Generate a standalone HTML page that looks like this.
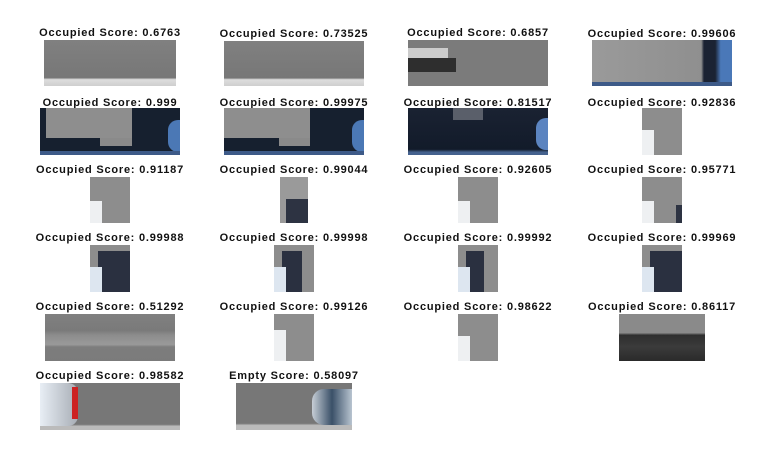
<!DOCTYPE html>
<html><head><meta charset="utf-8"><style>
body{margin:0;background:#fff;width:762px;height:462px;position:relative;overflow:hidden}
.t{position:absolute;width:220px;margin-left:-110px;text-align:center;font:bold 11px "Liberation Sans",Arial,sans-serif;letter-spacing:0.8px;color:#111;white-space:nowrap;line-height:12px}
.i{position:absolute;background:#7c7c7c;overflow:hidden}
.i b{position:absolute;display:block}
.road{background:linear-gradient(180deg,#808080 0%,#777 82%,#ddd 86%,#cfcfcf 100%)}
.dark2{background:linear-gradient(180deg,#1a2232 0%,#121b2a 88%,#45628e 94%,#45628e 100%)}
.narrow{background:#8d8d8d}
.curb{background:linear-gradient(180deg,#808080 0%,#7a7a7a 35%,#8c8c8c 45%,#9a9a9a 65%,#7d7d7d 70%,#7b7b7b 100%)}
.curb2{background:linear-gradient(180deg,#8a8a8a 0%,#8a8a8a 40%,#2e2e2e 45%,#3b3b3b 70%,#2a2a2a 100%)}
</style></head><body>
<div class="t" style="left:110px;top:27px">Occupied Score: 0.6763</div>
<div class="i road" style="left:44px;top:40px;width:132px;height:46px"></div>
<div class="t" style="left:294px;top:28px">Occupied Score: 0.73525</div>
<div class="i road" style="left:224px;top:41px;width:140px;height:45px"></div>
<div class="t" style="left:478px;top:27px">Occupied Score: 0.6857</div>
<div class="i" style="left:408px;top:40px;width:140px;height:46px;background:linear-gradient(180deg,#7b7b7b 0%,#7b7b7b 100%)"><b style="left:0;top:8px;width:40px;height:10px;background:#ccc"></b><b style="left:0;top:18px;width:48px;height:14px;background:#2e2e2e"></b></div>
<div class="t" style="left:662px;top:28px">Occupied Score: 0.99606</div>
<div class="i" style="left:592px;top:40px;width:140px;height:46px;background:linear-gradient(90deg,#9a9a9a 0%,#8f8f8f 78%,#1b2333 80%,#1b2333 88%,#4a78b8 92%)"><b style="left:0;bottom:0;width:140px;height:4px;background:#3d5a88"></b></div>

<div class="t" style="left:110px;top:97px">Occupied Score: 0.999</div>
<div class="i" style="left:40px;top:108px;width:140px;height:47px;background:#16202f"><b style="left:6px;top:0;width:86px;height:30px;background:#8e8e8e"></b><b style="left:60px;top:30px;width:32px;height:8px;background:#8a8a8a"></b><b style="right:0;top:12px;width:12px;height:32px;background:#4b78b5;border-radius:10px 0 0 10px"></b><b style="left:0;bottom:0;width:140px;height:4px;background:#3d5a88"></b></div>
<div class="t" style="left:294px;top:97px">Occupied Score: 0.99975</div>
<div class="i" style="left:224px;top:108px;width:140px;height:47px;background:#16202f"><b style="left:0;top:0;width:86px;height:30px;background:#8e8e8e"></b><b style="left:55px;top:30px;width:31px;height:8px;background:#8a8a8a"></b><b style="right:0;top:12px;width:12px;height:32px;background:#4b78b5;border-radius:10px 0 0 10px"></b><b style="left:0;bottom:0;width:140px;height:4px;background:#3d5a88"></b></div>
<div class="t" style="left:478px;top:97px">Occupied Score: 0.81517</div>
<div class="i dark2" style="left:408px;top:108px;width:140px;height:47px"><b style="left:45px;top:0;width:30px;height:12px;background:#5a5f6a"></b><b style="right:0;top:10px;width:12px;height:32px;background:#5b84c0;border-radius:10px 0 0 10px"></b></div>
<div class="t" style="left:662px;top:97px">Occupied Score: 0.92836</div>
<div class="i narrow" style="left:642px;top:108px;width:40px;height:47px"><b style="left:0;top:22px;width:12px;height:25px;background:#eef0f2"></b></div>

<div class="t" style="left:110px;top:164px">Occupied Score: 0.91187</div>
<div class="i narrow" style="left:90px;top:177px;width:40px;height:46px"><b style="left:0;top:24px;width:12px;height:22px;background:#eef0f2"></b></div>
<div class="t" style="left:294px;top:164px">Occupied Score: 0.99044</div>
<div class="i" style="left:280px;top:177px;width:28px;height:46px;background:#9a9a9a"><b style="left:6px;top:22px;width:22px;height:24px;background:#2d3342"></b></div>
<div class="t" style="left:478px;top:164px">Occupied Score: 0.92605</div>
<div class="i narrow" style="left:458px;top:177px;width:40px;height:46px"><b style="left:0;top:24px;width:12px;height:22px;background:#eef0f2"></b></div>
<div class="t" style="left:662px;top:164px">Occupied Score: 0.95771</div>
<div class="i narrow" style="left:642px;top:177px;width:40px;height:46px"><b style="left:0;top:24px;width:12px;height:22px;background:#eef0f2"></b><b style="right:0;top:28px;width:6px;height:18px;background:#2d3342"></b></div>

<div class="t" style="left:110px;top:232px">Occupied Score: 0.99988</div>
<div class="i narrow" style="left:90px;top:245px;width:40px;height:47px"><b style="left:8px;top:6px;width:32px;height:41px;background:#2a3040"></b><b style="left:0;top:22px;width:12px;height:25px;background:#dde6f0"></b></div>
<div class="t" style="left:294px;top:232px">Occupied Score: 0.99998</div>
<div class="i narrow" style="left:274px;top:245px;width:40px;height:47px"><b style="left:8px;top:6px;width:20px;height:41px;background:#2a3040"></b><b style="left:0;top:22px;width:12px;height:25px;background:#dde6f0"></b></div>
<div class="t" style="left:478px;top:232px">Occupied Score: 0.99992</div>
<div class="i narrow" style="left:458px;top:245px;width:40px;height:47px"><b style="left:8px;top:6px;width:18px;height:41px;background:#2a3040"></b><b style="left:0;top:22px;width:12px;height:25px;background:#dde6f0"></b></div>
<div class="t" style="left:662px;top:232px">Occupied Score: 0.99969</div>
<div class="i narrow" style="left:642px;top:245px;width:40px;height:47px"><b style="left:8px;top:6px;width:32px;height:41px;background:#2a3040"></b><b style="left:0;top:22px;width:12px;height:25px;background:#dde6f0"></b></div>

<div class="t" style="left:110px;top:301px">Occupied Score: 0.51292</div>
<div class="i curb" style="left:45px;top:314px;width:130px;height:47px"></div>
<div class="t" style="left:294px;top:301px">Occupied Score: 0.99126</div>
<div class="i narrow" style="left:274px;top:314px;width:40px;height:47px"><b style="left:0;top:16px;width:12px;height:31px;background:#eef0f2"></b></div>
<div class="t" style="left:478px;top:301px">Occupied Score: 0.98622</div>
<div class="i narrow" style="left:458px;top:314px;width:40px;height:47px"><b style="left:0;top:22px;width:12px;height:25px;background:#eef0f2"></b></div>
<div class="t" style="left:662px;top:301px">Occupied Score: 0.86117</div>
<div class="i curb2" style="left:619px;top:314px;width:86px;height:47px"></div>

<div class="t" style="left:110px;top:370px">Occupied Score: 0.98582</div>
<div class="i" style="left:40px;top:383px;width:140px;height:47px;background:linear-gradient(180deg,#777 0%,#777 88%,#bbb 92%)"><b style="left:0;top:0;width:38px;height:43px;background:linear-gradient(90deg,#e8eef5,#a7adb5);border-radius:0 10px 10px 0"></b><b style="left:32px;top:4px;width:6px;height:32px;background:#c22"></b></div>
<div class="t" style="left:294px;top:370px">Empty Score: 0.58097</div>
<div class="i" style="left:236px;top:383px;width:116px;height:47px;background:linear-gradient(180deg,#777 0%,#777 86%,#bbb 90%)"><b style="left:76px;top:6px;width:40px;height:36px;background:linear-gradient(90deg,#c7ced6,#3a5068 50%,#b8c4d0);border-radius:12px 0 0 12px"></b></div>
</body></html>
